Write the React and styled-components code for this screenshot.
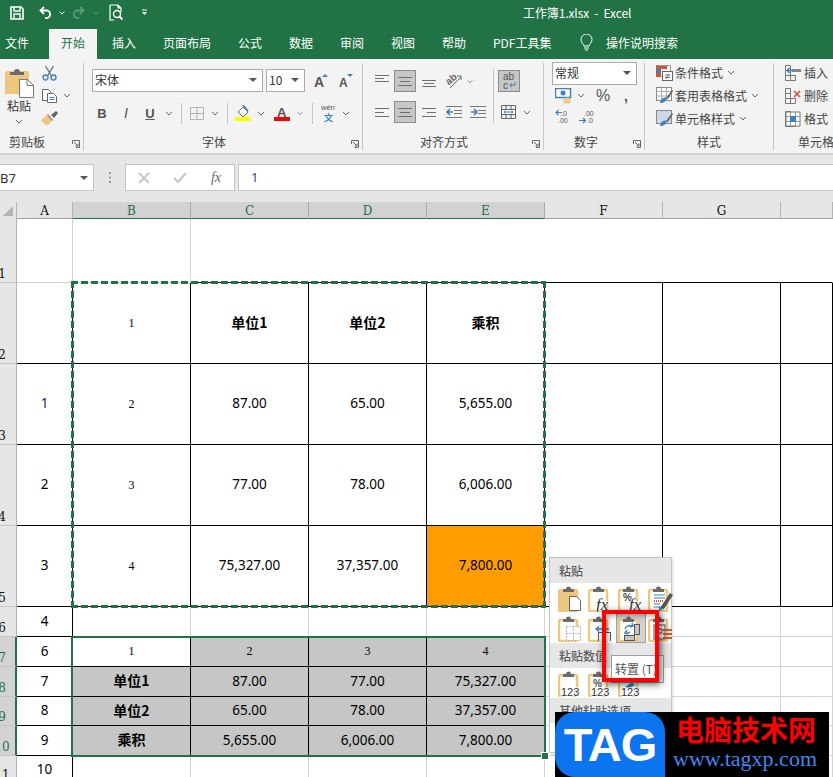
import React from 'react';
import styled, { createGlobalStyle } from 'styled-components';

const GREEN = '#217346';
const TAN = '#eec77f';
const GRAY = '#6b6b6b';
const BLUE = '#3f7fbf';
const UI = '"Noto Sans CJK SC", "Noto Sans", sans-serif';
const lineColors = { k: '#000', g: '#d4d4d4', n: 'transparent' };

const Global = createGlobalStyle`
  body { margin: 0; font-family: ${UI}; background: #fff; }
`;

const Page = styled.div`
  position: relative;
  width: 833px;
  height: 777px;
  overflow: hidden;
`;

/* title bar */
const TitleBar = styled.div`
  display: flex;
  align-items: center;
  height: 29px;
  padding-bottom: 4px;
  box-sizing: border-box;
  background: ${GREEN};
  color: #fff;
`;
const Quick = styled.div`
  display: flex;
  align-items: center;
  width: 523px;
`;
const Title = styled.div`
  font-size: 12px;
  white-space: pre;
  letter-spacing: -0.1px;
`;

/* tabs */
const TabBar = styled.div`
  display: flex;
  align-items: stretch;
  gap: 3px;
  height: 30px;
  padding-left: 5px;
  background: ${GREEN};
`;
const Tab = styled.div`
  width: ${(p) => p.$w || 48}px;
  padding-left: ${(p) => (p.$first ? 0 : 12)}px;
  box-sizing: border-box;
  line-height: 28px;
  font-size: 12px;
  white-space: nowrap;
  color: ${(p) => (p.$active ? GREEN : '#fff')};
  background: ${(p) => (p.$active ? '#f3f3f3' : 'transparent')};
`;
const SearchHint = styled.div`
  display: flex;
  align-items: center;
  gap: 13px;
  margin-left: 14px;
  padding-bottom: 3px;
  color: #fff;
  font-size: 12px;
`;

/* ribbon */
const Ribbon = styled.div`
  display: flex;
  height: 96px;
  padding-top: 4px;
  box-sizing: border-box;
  background: #f3f3f3;
  border-bottom: 2px solid #d4d4d4;
  color: #444;
  font-size: 12px;
`;
const Group = styled.div`
  display: flex;
  flex-direction: column;
  width: ${(p) => p.$w}px;
  height: 87px;
  flex: none;
  box-sizing: border-box;
  border-right: 1px solid ${(p) => (p.$last ? 'transparent' : '#c6c6c6')};
`;
const GroupBody = styled.div`
  flex: 1;
  display: flex;
  min-height: 0;
  padding-left: ${(p) => p.$pl || 0}px;
`;
const GroupFoot = styled.div`
  display: flex;
  align-items: center;
  height: 17px;
  flex: none;
  padding-left: ${(p) => p.$pl}px;
  padding-right: 3px;
  white-space: nowrap;
  font-size: 12px;
  color: #444;
`;
const Launcher = styled.svg`
  margin-left: auto;
  margin-top: 4px;
`;
const Stack = styled.div`
  display: flex;
  flex-direction: column;
  padding-top: ${(p) => p.$pt || 0}px;
  margin-left: ${(p) => p.$ml || 0}px;
  margin-top: ${(p) => p.$mt || 0}px;
  gap: ${(p) => p.$gap || 0}px;
`;
const Row = styled.div`
  display: flex;
  align-items: center;
  height: ${(p) => p.$h || 22}px;
  margin-left: ${(p) => p.$ml || 0}px;
`;
const Slot = styled.div`
  display: flex;
  align-items: center;
  justify-content: center;
  flex: none;
  width: ${(p) => p.$w}px;
  height: 100%;
  color: #555;
`;
const Sep = styled.div`
  flex: none;
  width: 1px;
  height: ${(p) => p.$h}px;
  margin-left: ${(p) => p.$ml || 0}px;
  background: #c6c6c6;
`;
const ActiveBox = styled.div`
  display: flex;
  align-items: center;
  justify-content: center;
  width: 22px;
  height: 22px;
  box-sizing: border-box;
  flex: none;
  background: #c6c6c6;
  border: 1px solid #8c8c8c;
`;
const PasteColumn = styled.div`
  display: flex;
  flex-direction: column;
  align-items: center;
  width: 28px;
  margin-left: 5px;
  padding-top: 4px;
  font-size: 12px;
  color: #333;
  line-height: 16px;
`;
const ClipTools = styled.div`
  display: flex;
  flex-direction: column;
  margin-left: 7px;
  margin-top: -2px;
`;
const Select = styled.div`
  display: flex;
  align-items: center;
  justify-content: space-between;
  flex: none;
  width: ${(p) => p.$w}px;
  height: 23px;
  margin-right: ${(p) => p.$mr || 0}px;
  margin-top: ${(p) => p.$mt || 0}px;
  padding: 0 5px 2px 2px;
  box-sizing: border-box;
  background: #fff;
  border: 1px solid #ababab;
  font-size: 12px;
  color: #333;
`;
const StyleRow = styled.div`
  display: flex;
  align-items: center;
  gap: ${(p) => p.$gap || 2}px;
  height: 23px;
  font-size: 12px;
  color: #444;
  white-space: nowrap;
`;
const Chevron = () => (
  <svg width="8" height="5" viewBox="0 0 8 5"><path d="M1 1l3 3 3-3" fill="none" stroke="#666" strokeWidth="1" /></svg>
);
const Caret = () => (
  <svg width="8" height="4" viewBox="0 0 8 4"><path d="M0 0h8L4 4z" fill="#555" /></svg>
);
const FontLetter = styled.span`
  font-family: "Liberation Sans", sans-serif;
  font-size: ${(p) => p.$size || 13}px;
  font-weight: ${(p) => (p.$bold ? 700 : 400)};
  font-style: ${(p) => (p.$italic ? 'italic' : 'normal')};
  text-decoration: ${(p) => (p.$under ? 'underline' : 'none')};
  color: #555;
`;

/* formula bar */
const FormulaBar = styled.div`
  display: flex;
  align-items: flex-start;
  height: 47px;
  padding-top: 9px;
  box-sizing: border-box;
  background: #e6e6e6;
`;
const NameBox = styled.div`
  display: flex;
  align-items: center;
  justify-content: space-between;
  width: 94px;
  height: 27px;
  padding: 0 5px 0 0;
  box-sizing: border-box;
  background: #fff;
  border: 1px solid #c6c6c6;
  border-left: 0;
  font: 13px "Noto Sans", sans-serif;
  color: #333;
`;
const FxButtons = styled.div`
  display: flex;
  align-items: center;
  width: 110px;
  height: 27px;
  box-sizing: border-box;
  background: #fff;
  border: 1px solid #c6c6c6;
`;
const Grip = styled.div`
  width: 31px;
  height: 27px;
  display: flex;
  align-items: center;
  justify-content: center;
`;
const FormulaInput = styled.div`
  flex: 1;
  height: 27px;
  margin-left: 3px;
  padding-left: 12px;
  box-sizing: border-box;
  background: #fff;
  border: 1px solid #c6c6c6;
  border-right: 0;
  font: 13px/25px "Noto Sans", sans-serif;
  color: #24527f;
`;
const FxSlot = styled.div`
  width: 36px;
  display: flex;
  justify-content: center;
  font: italic 14px "Liberation Serif", serif;
  color: #666;
`;

/* sheet */
const Sheet = styled.div`
  position: relative;
`;
const ColHeaders = styled.div`
  display: grid;
  grid-template-columns: 17px 56px repeat(6, 118px) 1fr;
  height: 17px;
  background: #e6e6e6;
`;
const ColHead = styled.div`
  display: flex;
  align-items: center;
  justify-content: center;
  padding-top: 2px;
  box-sizing: border-box;
  font: 12px "DejaVu Serif", "Liberation Serif", serif;
  background: ${(p) => (p.$on ? '#d2d2d2' : '#e6e6e6')};
  color: ${(p) => (p.$on ? GREEN : '#111')};
  border-right: 1px solid ${(p) => (p.$on ? '#ababab' : '#b4b4b4')};
  border-bottom: 2px solid ${(p) => (p.$on ? GREEN : '#a0a0a0')};
`;
const Corner = styled.div`
  display: flex;
  align-items: flex-end;
  justify-content: flex-end;
  padding: 0 3px 3px 0;
  box-sizing: border-box;
  border-right: 1px solid #b4b4b4;
  border-bottom: 1px solid #b4b4b4;
`;
const CellGrid = styled.div`
  display: grid;
  grid-template-columns: 17px 56px repeat(6, 118px) 1fr;
  grid-template-rows: 64px 81px 81px 81px 81px 30px 30px 30px 29px 30px 28px;
`;
const RowHead = styled.div`
  display: flex;
  align-items: flex-end;
  overflow: hidden;
  box-sizing: border-box;
  background: ${(p) => (p.$on ? '#d2d2d2' : '#e6e6e6')};
  color: ${(p) => (p.$on ? GREEN : '#111')};
  border-right: ${(p) => (p.$on ? `2px solid ${GREEN}` : '1px solid #b4b4b4')};
  border-bottom: 1px solid #c6c6c6;
  font: 12px/16px "DejaVu Serif", "Liberation Serif", serif;
  span {
    flex: none;
    width: 24px;
    margin-left: -10px;
    text-align: center;
  }
`;
const Cell = styled.div`
  display: flex;
  align-items: center;
  justify-content: center;
  padding-bottom: ${(p) => (p.$bold ? 3 : p.$serif ? 0 : 2)}px;
  box-sizing: border-box;
  grid-column: ${(p) => (p.$span ? `span ${p.$span}` : 'auto')};
  background: ${(p) => p.$bg || '#fff'};
  color: ${(p) => p.$color || '#000'};
  border-right: 1px solid ${(p) => lineColors[p.$r || 'n']};
  border-bottom: 1px solid ${(p) => lineColors[p.$b || 'n']};
  font-family: ${(p) => (p.$serif ? '"Liberation Serif", serif' : p.$bold ? UI : '"Noto Sans", sans-serif')};
  font-size: ${(p) => (p.$serif ? 12 : p.$bold ? 14 : 13.5)}px;
  font-weight: ${(p) => (p.$bold ? 700 : 400)};
`;
const CopyAnts = styled.div`
  position: absolute;
  left: 71px;
  top: 79px;
  width: 475px;
  height: 327px;
  background:
    repeating-linear-gradient(90deg, ${GREEN} 0 7px, transparent 7px 10px) top / 100% 3px no-repeat,
    repeating-linear-gradient(90deg, ${GREEN} 0 7px, transparent 7px 10px) bottom / 100% 3px no-repeat,
    repeating-linear-gradient(0deg, ${GREEN} 0 7px, transparent 7px 10px) left / 3px 100% no-repeat,
    repeating-linear-gradient(0deg, ${GREEN} 0 7px, transparent 7px 10px) right / 3px 100% no-repeat;
`;
const Selection = styled.div`
  position: absolute;
  left: 71px;
  top: 434px;
  width: 475px;
  height: 121px;
  box-sizing: border-box;
  border: 2px solid ${GREEN};
  &::after {
    content: '';
    position: absolute;
    right: -5px;
    bottom: -5px;
    width: 6px;
    height: 6px;
    background: ${GREEN};
    border: 1px solid #fff;
  }
`;

/* paste menu */
const PasteMenu = styled.div`
  position: absolute;
  left: 549px;
  top: 557px;
  width: 123px;
  height: 196px;
  box-sizing: border-box;
  background: #fff;
  border: 1px solid #c6c6c6;
  box-shadow: 1px 1px 3px rgba(0, 0, 0, 0.15);
`;
const MenuHead = styled.div`
  height: 25px;
  padding-left: 9px;
  background: #e6e6e6;
  font-size: 12px;
  font-weight: 500;
  line-height: 25px;
  color: #5c5c5c;
`;
const MenuIcons = styled.div`
  display: grid;
  grid-template-columns: repeat(4, 30px);
  grid-auto-rows: 30px;
  padding: ${(p) => p.$pt || 0}px 0 0 6px;
`;
const MenuIcon = styled.div`
  display: flex;
  align-items: center;
  justify-content: center;
  box-sizing: border-box;
  background: ${(p) => (p.$on ? '#d2d2d2' : 'transparent')};
  border: 1px solid ${(p) => (p.$on ? '#a0a0a0' : 'transparent')};
`;
const Tip = styled.div`
  position: absolute;
  left: 611px;
  top: 655px;
  width: 53px;
  height: 28px;
  padding-left: 3px;
  box-sizing: border-box;
  background: #fff;
  border: 1px solid #a0a0a0;
  font-size: 12px;
  line-height: 26px;
  color: #555;
  white-space: nowrap;
  overflow: hidden;
`;
const RedMark = styled.div`
  position: absolute;
  left: 602px;
  top: 610px;
  width: 57px;
  height: 72px;
  box-sizing: border-box;
  border: 4px solid #f00;
  box-shadow: 2px 2px 7px rgba(0, 0, 0, 0.65), inset 2px 2px 5px rgba(0, 0, 0, 0.35);
`;

/* watermark */
const Watermark = styled.div`
  position: absolute;
  left: 555px;
  top: 712px;
  display: flex;
  width: 274px;
  height: 65px;
  background: #000;
`;
const LogoBadge = styled.div`
  display: flex;
  align-items: center;
  justify-content: center;
  width: 110px;
  height: 65px;
  flex: none;
  border-radius: 20px 20px 0 20px;
  background: #0b74ee;
  color: #fff;
  font: 700 47px "Liberation Sans", sans-serif;
  letter-spacing: -1px;
`;
const LogoText = styled.div`
  display: flex;
  flex-direction: column;
  padding-left: 11px;
`;
const LogoCn = styled.div`
  font: 700 28px/34px "Noto Sans CJK SC", sans-serif;
  margin-top: 0;
  color: #f00;
  white-space: nowrap;
`;
const LogoUrl = styled.div`
  font: 22px/26px "Liberation Serif", serif;
  margin-left: -3px;
  color: #3b8af0;
  white-space: nowrap;
`;

/* icons */
const Svg = ({ w, h, children }) => (
  <svg width={w} height={h} viewBox={`0 0 ${w} ${h}`} fill="none">{children}</svg>
);
const Mirrored = styled.span`
  display: flex;
  transform: scaleX(-1);
`;
const SaveIcon = () => (
  <Svg w={14} h={14}>
    <path d="M1 1h10l2 2v10H1z" stroke="#fff" strokeWidth="1.6" />
    <path d="M4 1v4h6V1M4 13V8h6v5" stroke="#fff" strokeWidth="1.4" />
  </Svg>
);
const UndoIcon = ({ dim }) => (
  <Svg w={14} h={13}>
    <path d="M5 1L1.5 4.5 5 8M2 4.5h6.5a4 4 0 0 1 0 7.5H6" stroke={dim ? '#5b9a7b' : '#fff'} strokeWidth="1.8" />
  </Svg>
);
const QChev = ({ dim }) => (
  <svg width="6" height="4" viewBox="0 0 6 4"><path d="M.5.5L3 3 5.5.5" fill="none" stroke={dim ? '#5b9a7b' : '#fff'} /></svg>
);
const PreviewIcon = () => (
  <Svg w={15} h={17}>
    <path d="M1 1h8l3 3v4M5 16H1V1M9 1v3h3" stroke="#fff" strokeWidth="1.2" />
    <circle cx="8" cy="10" r="3.5" stroke="#fff" strokeWidth="1.4" />
    <path d="M10.5 12.5l3 3" stroke="#fff" strokeWidth="1.8" />
  </Svg>
);
const CustomizeIcon = () => (
  <Svg w={7} h={7}>
    <path d="M1 1h5" stroke="#fff" />
    <path d="M1 3h5L3.5 6z" fill="#fff" />
  </Svg>
);
const BulbIcon = () => (
  <Svg w={13} h={18}>
    <path d="M4 12c0-2-3-3-3-6.500a5.500 5.500 0 0 1 11 0C12 9 9 10 9 12z" stroke="#fff" strokeWidth="1" />
    <path d="M4 14h5M5 16h3" stroke="#fff" />
  </Svg>
);
const BigPaste = () => (
  <Svg w={29} h={31}>
    <path d="M0 6a2 2 0 0 1 2-2h20a2 2 0 0 1 2 2v21H0z" fill={TAN} />
    <path d="M5 5h4a3 3 0 0 1 6 0h4v3H5z" fill={GRAY} />
    <path d="M14.500 12.500h8l6 6v12h-14z" fill="#fff" stroke="#777" />
    <path d="M22 12.500v6h6.500" stroke="#777" />
  </Svg>
);
const ScissorsIcon = () => (
  <Svg w={15} h={16}>
    <path d="M3.500 1l6 10M11.500 1l-6 10" stroke="#666" strokeWidth="1.2" />
    <circle cx="3.500" cy="12.500" r="2.500" stroke={BLUE} strokeWidth="1.300" />
    <circle cx="11.500" cy="12.500" r="2.500" stroke={BLUE} strokeWidth="1.300" />
  </Svg>
);
const CopyIcon = () => (
  <Svg w={15} h={14}>
    <path d="M.5.500h6l2 2v9h-8z" fill="#fff" stroke="#666" />
    <path d="M5.500 4.500h6l3 3v6h-9z" fill="#fff" stroke="#666" />
    <path d="M7.500 8.500h5M7.500 10.500h5" stroke={BLUE} />
  </Svg>
);
const BrushIcon = () => (
  <Svg w={17} h={15}>
    <path d="M0 9l6-5 5 6-4 4c-2 1-5-2-7-5z" fill={TAN} />
    <path d="M6 4l5 6 1-1-5-6z" fill="#888" />
    <path d="M10 4l5-4 2 2-4 5z" fill="#666" />
  </Svg>
);
const GrowA = ({ down }) => (
  <Svg w={15} h={17}>
    <text x="0" y="15" fontFamily="Liberation Sans" fontSize={down ? 12 : 14} fill="#555" fontWeight="700">A</text>
    <path d={down ? 'M8 2h6l-3 3z' : 'M8 5h6l-3-3z'} fill={BLUE} />
  </Svg>
);
const BorderIcon = () => (
  <Svg w={14} h={13}>
    <path d="M.5.500h13v12H.5zM.5 6.500h13M7 .5v12" stroke="#777" strokeDasharray="1 1" />
  </Svg>
);
const FillIcon = () => (
  <Svg w={16} h={16}>
    <path d="M3 7l5-5 5 5-5 5z" fill="#fff" stroke="#666" />
    <path d="M8 0l5 6" stroke={BLUE} strokeWidth="1.500" />
    <rect x="0" y="12" width="16" height="4" fill="#ff0" />
  </Svg>
);
const ColorA = () => (
  <Svg w={16} h={16}>
    <text x="3" y="12" fontFamily="Liberation Sans" fontSize="13" fontWeight="700" fill="#555">A</text>
    <rect x="0" y="12" width="16" height="4" fill="#f00" />
  </Svg>
);
const Phonetic = () => (
  <Svg w={16} h={20}>
    <text x="0" y="7" fontFamily="Liberation Sans" fontSize="8" fill="#555">wén</text>
    <text x="3" y="18" fontFamily="Noto Sans CJK SC" fontSize="10" fontWeight="700" fill={BLUE}>文</text>
  </Svg>
);
const Lines = ({ kind = 'center', ys = [3, 7, 11] }) => {
  const widths = { left: [[1, 15], [1, 10], [1, 15]], center: [[1, 15], [3, 13], [1, 15]], right: [[1, 15], [6, 15], [1, 15]] }[kind];
  return (
    <Svg w={16} h={14}>
      {ys.map((y, i) => (
        <path key={y} d={`M${widths[i][0]} ${y + 0.5}H${widths[i][1]}`} stroke="#707070" />
      ))}
    </Svg>
  );
};
const OrientIcon = () => (
  <Svg w={18} h={18}>
    <text x="1" y="10" fontFamily="Liberation Sans" fontSize="10" fontWeight="700" fill="#666" transform="rotate(-40 7 8)">ab</text>
    <path d="M5 16L16 5M12 4h4v4" stroke="#666" />
  </Svg>
);
const Indent = ({ flip }) => (
  <Svg w={16} h={14}>
    <path d="M0 1.500h16M8 5.500h8M8 8.500h8M0 12.500h16" stroke="#777" />
    <path d={flip ? 'M7 7H1M4 4l3 3-3 3' : 'M1 7h6M4 4L1 7l3 3'} stroke={BLUE} strokeWidth="1.600" />
  </Svg>
);
const WrapIcon = () => (
  <Svg w={16} h={20}>
    <text x="2" y="9" fontFamily="Liberation Sans" fontSize="10" fill="#555">ab</text>
    <text x="2" y="18" fontFamily="Liberation Sans" fontSize="10" fill="#555">c</text>
    <path d="M14 11v3H9M11 12l-2 2 2 2" stroke={BLUE} />
  </Svg>
);
const MergeIcon = () => (
  <Svg w={15} h={14}>
    <path d="M.5.500h14v13H.5zM.5 4.500h14M.5 9.500h14M5 .5v4M10 .5v4M5 9.500v4M10 9.500v4" stroke="#666" />
    <rect x="1" y="5" width="13" height="4" fill="#fff" />
    <path d="M3 7h9M4.500 5.500L3 7l1.500 1.500M10.500 5.500L12 7l-1.500 1.500" stroke={BLUE} />
  </Svg>
);
const CurrencyIcon = () => (
  <Svg w={17} h={16}>
    <rect x=".5" y=".5" width="15" height="9" fill="#fff" stroke={BLUE} strokeWidth="1.500" />
    <circle cx="8" cy="5" r="2.500" fill={BLUE} />
    <ellipse cx="12" cy="11" rx="4" ry="1.500" fill={TAN} />
    <ellipse cx="12" cy="14" rx="4" ry="1.500" fill={TAN} />
  </Svg>
);
const DecimalIcon = ({ inc }) => (
  <Svg w={16} h={15}>
    <text x={inc ? 5 : 6} y="7" fontFamily="Liberation Sans" fontSize="7" fill="#555">{inc ? '.00' : '.0'}</text>
    <text x={inc ? 8 : 3} y="14" fontFamily="Liberation Sans" fontSize="7" fill="#555">{inc ? '.0' : '.00'}</text>
    <path d={inc ? 'M0 11.500h6M4 9l2.500 2.500L4 14' : 'M7 3.500H1M3.500 1L1 3.500 3.500 6'} stroke={BLUE} strokeWidth="1.200" />
  </Svg>
);
const CondIcon = () => (
  <Svg w={17} h={16}>
    <rect x="0" y="0" width="11" height="4" fill="#d35230" />
    <rect x="0" y="4" width="5" height="4" fill="#3f7fbf" />
    <rect x="0" y="8" width="5" height="4" fill="#d35230" />
    <path d="M.5.500h14v8" stroke="#999" />
    <rect x="6.500" y="6.500" width="10" height="9" fill="#fff" stroke="#666" />
    <path d="M9 10h5M9 12.500h5M10 14l3-5" stroke="#555" strokeWidth=".8" />
  </Svg>
);
const TableStyleIcon = ({ plain }) => (
  <Svg w={17} h={17}>
    <rect x=".5" y=".5" width="15" height="13" fill={plain ? '#cfd8e6' : '#fff'} stroke="#888" />
    {!plain && <path d="M.5 4.500h15M.5 9h15M5.500.5v13M10.500.5v13" stroke="#aaa" />}
    <path d="M10 11l6-8 1 1-5 8z" fill="#666" />
    <path d="M5 13c2-3 4-3 6-2-1 3-3 5-7 5z" fill={BLUE} />
  </Svg>
);
const CellInsert = ({ kind }) => (
  <Svg w={16} h={16}>
    <path d="M.5.500h5v5h-5zM.5 5.500h5v5h-5zM.5 10.500h5v5h-5zM5.500 10.500h5v5h-5z" stroke="#777" />
    {kind === 'insert' && <path d="M7 5.500h9" stroke="#888" strokeWidth="3" />}
    {kind === 'insert' && <path d="M8 5.500H2M4.500 3L2 5.500 4.500 8" stroke={BLUE} strokeWidth="1.400" />}
    {kind === 'delete' && <path d="M9 3l6 6M15 3L9 9" stroke="#d35230" strokeWidth="1.600" />}
    {kind === 'format' && <path d="M1 1h14v14H1z" fill="#fff" stroke="#777" />}
    {kind === 'format' && <path d="M1 5.500h14M1 10.500h14M5.500 1v14M10.500 1v14" stroke="#999" />}
    {kind === 'format' && <rect x="5" y="5" width="6" height="6" fill={BLUE} />}
  </Svg>
);
const LauncherIcon = () => (
  <Launcher width="8" height="8" viewBox="0 0 8 8" fill="none">
    <path d="M.5 4V.5H7.500V7.500H4M2 2l4 4M6 3.500V6H3.500" stroke="#666" />
  </Launcher>
);
const Clip = ({ solid, children }) => (
  <Svg w={26} h={27}>
    <path d="M2.500 5h15a1.500 1.500 0 0 1 1.500 1.500v18a1.500 1.500 0 0 1-1.500 1.500h-15A1.500 1.500 0 0 1 1 24.500v-18A1.500 1.500 0 0 1 2.500 5z" fill={solid ? TAN : '#fff'} stroke={TAN} strokeWidth="2.500" />
    <path d="M5 6V4h3a2.500 2.500 0 0 1 5 0h3v3H5z" fill={GRAY} />
    {children}
  </Svg>
);
const Formula = ({ pct }) => (
  <>
    {pct && <text x="5" y="16" fontFamily="Liberation Sans" fontWeight="700" fontSize="10" fill="#444">%</text>}
    <text x={pct ? 11 : 8} y="25" fontFamily="Liberation Serif" fontStyle="italic" fontSize="17" fill="#333" stroke="#fff" strokeWidth="1.500" paintOrder="stroke">fx</text>
  </>
);
const MenuNum = () => (
  <text x="3" y="26" fontFamily="Liberation Sans" fontSize="11" fill="#333" stroke="#fff" strokeWidth="1.500" paintOrder="stroke">123</text>
);
const menuTop = [
  <Clip solid key="a"><path d="M11.500 11.500h7l4 4v10h-11z" fill="#fff" stroke="#666" /></Clip>,
  <Clip key="b"><Formula /></Clip>,
  <Clip key="c"><Formula pct /></Clip>,
  <Clip key="d">
    <path d="M6 10h11M6 13h11" stroke={BLUE} />
    <path d="M6 16h9" stroke="#d35230" strokeWidth="2" strokeDasharray="1 1" />
    <path d="M6 19h6M6 22h6" stroke={BLUE} />
    <path d="M12 23l10-15 3 2-9 14z" fill="#555" />
    <path d="M11 21l5 3-5 2z" fill={BLUE} />
  </Clip>,
];
const menuMid = [
  <Clip key="e"><path d="M8.500 11.500h14v14h-14zM8.500 18.500h14M15.500 11.500v14" stroke="#777" strokeDasharray="1 2" fill="#fff" /></Clip>,
  <Clip key="f">
    <path d="M10.500 26v-8.500h12V26" stroke="#555" fill="#fff" />
    <path d="M8 14h13M11 11.500L8 14l3 2.500" stroke={BLUE} strokeWidth="1.400" />
  </Clip>,
  <Clip key="g">
    <path d="M7 14a5 5 0 0 1 7-3M14 8l1 3-3 1M12 17a5 5 0 0 1-5 1M9 15l-2 3 3 1" stroke={BLUE} strokeWidth="1.400" />
    <rect x="16.500" y="9.500" width="5" height="10" fill="#c6c6c6" stroke="#555" />
    <rect x="6.500" y="20.500" width="10" height="5" fill="#c6c6c6" stroke="#555" />
  </Clip>,
  <Clip key="h">
    <rect x="6" y="10" width="11" height="14" fill="#fff" stroke="#555" />
    <path d="M9 14h5v4H9z" stroke="#555" />
    <path d="M15 15h9M15 19h9M15 23h9" stroke="#d35230" strokeWidth="2" />
  </Clip>,
];
const menuValues = [
  <Clip key="i"><MenuNum /></Clip>,
  <Clip key="j">
    <text x="5" y="17" fontFamily="Liberation Sans" fontWeight="700" fontSize="10" fill="#555">%</text>
    <MenuNum />
  </Clip>,
  <Clip key="k">
    <path d="M7 17l7-5 3 3-5 3z" fill={BLUE} />
    <MenuNum />
  </Clip>,
];

/* sheet data */
const COLS = ['A', 'B', 'C', 'D', 'E', 'F', 'G', 'H'];
const emptyTail = (n, line) => Array.from({ length: n }, () => ({ r: line, b: line }));
const head = (t) => ({ t, bold: true, r: 'k', b: 'k' });
const num = (t, extra) => ({ t, r: 'k', b: 'k', ...extra });
const ser = (t, extra) => ({ t, serif: true, r: 'k', b: 'k', ...extra });
const NAVY = '#1a1a80';
const SEL = '#c6c6c6';

const rows = [
  { n: 1, cells: [{ r: 'g', b: 'g' }, { r: 'g', b: 'g' }, { span: 6, b: 'k' }] },
  { n: 2, cells: [{ r: 'k', b: 'k' }, ser('1'), head('单位1'), head('单位2'), head('乘积'), ...emptyTail(3, 'k')] },
  { n: 3, cells: [num('1', { color: NAVY }), ser('2'), num('87.00'), num('65.00'), num('5,655.00'), ...emptyTail(3, 'k')] },
  { n: 4, cells: [num('2'), ser('3'), num('77.00'), num('78.00'), num('6,006.00'), ...emptyTail(3, 'k')] },
  { n: 5, cells: [num('3'), ser('4'), num('75,327.00'), num('37,357.00'), num('7,800.00', { bg: '#ff9c00' }), ...emptyTail(3, 'k')] },
  { n: 6, cells: [num('4'), ...emptyTail(7, 'g')] },
  { n: 7, on: true, cells: [num('6'), ser('1'), ser('2', { bg: SEL }), ser('3', { bg: SEL }), ser('4', { bg: SEL }), ...emptyTail(3, 'g')] },
  { n: 8, on: true, cells: [num('7'), { ...head('单位1'), bg: SEL }, num('87.00', { bg: SEL }), num('77.00', { bg: SEL }), num('75,327.00', { bg: SEL }), ...emptyTail(3, 'g')] },
  { n: 9, on: true, cells: [num('8'), { ...head('单位2'), bg: SEL }, num('65.00', { bg: SEL }), num('78.00', { bg: SEL }), num('37,357.00', { bg: SEL }), ...emptyTail(3, 'g')] },
  { n: 10, on: true, cells: [num('9'), { ...head('乘积'), bg: SEL }, num('5,655.00', { bg: SEL }), num('6,006.00', { bg: SEL }), num('7,800.00', { bg: SEL }), ...emptyTail(3, 'g')] },
  { n: 11, cells: [num('10', { b: 'g' }), ...emptyTail(7, 'g')] },
];

const tabs = [
  { t: '开始', active: true },
  { t: '插入' },
  { t: '页面布局', w: 72 },
  { t: '公式' },
  { t: '数据' },
  { t: '审阅' },
  { t: '视图' },
  { t: '帮助' },
  { t: 'PDF工具集', w: 82 },
];

const App = () => (
  <Page>
    <Global />
    <TitleBar>
      <Quick>
        <Slot $w={34}><SaveIcon /></Slot>
        <Slot $w={24}><UndoIcon /></Slot>
        <Slot $w={8}><QChev /></Slot>
        <Slot $w={23}><Mirrored><UndoIcon dim /></Mirrored></Slot>
        <Slot $w={14}><QChev dim /></Slot>
        <Slot $w={26}><PreviewIcon /></Slot>
        <Slot $w={30}><CustomizeIcon /></Slot>
      </Quick>
      <Title>工作簿1.xlsx  -  Excel</Title>
    </TitleBar>

    <TabBar>
      <Tab $first $w={41}>文件</Tab>
      {tabs.map((tab) => (
        <Tab key={tab.t} $w={tab.w} $active={tab.active}>{tab.t}</Tab>
      ))}
      <SearchHint>
        <BulbIcon />
        操作说明搜索
      </SearchHint>
    </TabBar>

    <Ribbon>
      <Group $w={84}>
        <GroupBody>
          <PasteColumn>
            <BigPaste />
            <span>粘贴</span>
            <Row $h={14}><Chevron /></Row>
          </PasteColumn>
          <ClipTools>
            <Row $h={23}><Slot $w={18}><ScissorsIcon /></Slot></Row>
            <Row $h={23}><Slot $w={18}><CopyIcon /></Slot><Slot $w={18}><Chevron /></Slot></Row>
            <Row $h={23}><Slot $w={18}><BrushIcon /></Slot></Row>
          </ClipTools>
        </GroupBody>
        <GroupFoot $pl={9}>剪贴板<LauncherIcon /></GroupFoot>
      </Group>

      <Group $w={279}>
        <GroupBody $pl={8}>
          <Stack $pt={6} $gap={9}>
            <Row $h={23}>
              <Select $w={171} $mr={3}>宋体<Caret /></Select>
              <Select $w={39}><span>10</span><Caret /></Select>
              <Slot $w={32}><GrowA /></Slot>
              <Slot $w={18}><GrowA down /></Slot>
            </Row>
            <Row $h={24} $ml={-2}>
              <Slot $w={24}><FontLetter $bold>B</FontLetter></Slot>
              <Slot $w={24}><FontLetter $italic $size={14}>I</FontLetter></Slot>
              <Slot $w={24}><FontLetter $under $bold>U</FontLetter></Slot>
              <Slot $w={14}><Chevron /></Slot>
              <Slot $w={10}><Sep $h={21} /></Slot>
              <Slot $w={21}><BorderIcon /></Slot>
              <Slot $w={16}><Chevron /></Slot>
              <Slot $w={8}><Sep $h={21} /></Slot>
              <Slot $w={24}><FillIcon /></Slot>
              <Slot $w={12}><Chevron /></Slot>
              <Slot $w={30}><ColorA /></Slot>
              <Slot $w={6}><Chevron /></Slot>
              <Slot $w={18}><Sep $h={21} /></Slot>
              <Slot $w={15}><Phonetic /></Slot>
              <Slot $w={20}><Chevron /></Slot>
            </Row>
          </Stack>
        </GroupBody>
        <GroupFoot $pl={118}>字体<LauncherIcon /></GroupFoot>
      </Group>

      <Group $w={181}>
        <GroupBody $pl={6}>
          <Stack $pt={7} $gap={9}>
            <Row>
              <Slot $w={25}><Lines kind="left" ys={[1, 4, 7]} /></Slot>
              <ActiveBox><Lines /></ActiveBox>
              <Slot $w={25}><Lines ys={[6, 9, 12]} /></Slot>
              <Slot $w={26}><OrientIcon /></Slot>
              <Slot $w={6}><Chevron /></Slot>
            </Row>
            <Row>
              <Slot $w={25}><Lines kind="left" /></Slot>
              <ActiveBox><Lines /></ActiveBox>
              <Slot $w={25}><Lines kind="right" /></Slot>
              <Slot $w={26}><Indent /></Slot>
              <Slot $w={22}><Indent flip /></Slot>
            </Row>
          </Stack>
          <Stack $pt={6}><Sep $h={54} $ml={4} /></Stack>
          <Stack $pt={7} $gap={9} $ml={4}>
            <Row><ActiveBox><WrapIcon /></ActiveBox></Row>
            <Row>
              <Slot $w={21}><MergeIcon /></Slot>
              <Slot $w={16}><Chevron /></Slot>
            </Row>
          </Stack>
        </GroupBody>
        <GroupFoot $pl={57}>对齐方式<LauncherIcon /></GroupFoot>
      </Group>

      <Group $w={101}>
        <GroupBody $pl={8}>
          <Stack>
            <Select $w={85} $mt={-1}>常规<Caret /></Select>
            <Row $h={21}>
              <Slot $w={22}><CurrencyIcon /></Slot>
              <Slot $w={14}><Chevron /></Slot>
              <Slot $w={30}><FontLetter $size={16}>%</FontLetter></Slot>
              <Slot $w={16}><FontLetter $bold $size={14}>,</FontLetter></Slot>
            </Row>
            <Row $h={21}>
              <Slot $w={21}><DecimalIcon /></Slot>
              <Slot $w={27}><DecimalIcon inc /></Slot>
            </Row>
          </Stack>
        </GroupBody>
        <GroupFoot $pl={30}>数字<LauncherIcon /></GroupFoot>
      </Group>

      <Group $w={129}>
        <GroupBody $pl={11}>
          <Stack $mt={-2}>
            <StyleRow><CondIcon />条件格式<Slot $w={12}><Chevron /></Slot></StyleRow>
            <StyleRow><TableStyleIcon />套用表格格式<Slot $w={12}><Chevron /></Slot></StyleRow>
            <StyleRow><TableStyleIcon plain />单元格样式<Slot $w={12}><Chevron /></Slot></StyleRow>
          </Stack>
        </GroupBody>
        <GroupFoot $pl={52}>样式</GroupFoot>
      </Group>

      <Group $w={59} $last>
        <GroupBody $pl={11}>
          <Stack $mt={-2}>
            <StyleRow $gap={3}><CellInsert kind="insert" />插入</StyleRow>
            <StyleRow $gap={3}><CellInsert kind="delete" />删除</StyleRow>
            <StyleRow $gap={3}><CellInsert kind="format" />格式</StyleRow>
          </Stack>
        </GroupBody>
        <GroupFoot $pl={24}>单元格</GroupFoot>
      </Group>
    </Ribbon>

    <FormulaBar>
      <NameBox>B7<Caret /></NameBox>
      <Grip>
        <Svg w={2} h={11}><path d="M1 0v2M1 4.500v2M1 9v2" stroke="#999" strokeWidth="2" /></Svg>
      </Grip>
      <FxButtons>
        <FxSlot>
          <Svg w={12} h={12}><path d="M1 1l10 10M11 1L1 11" stroke="#c6c6c6" strokeWidth="1.800" /></Svg>
        </FxSlot>
        <FxSlot>
          <Svg w={14} h={12}><path d="M1 6l4 4 8-9" stroke="#c6c6c6" strokeWidth="2" /></Svg>
        </FxSlot>
        <FxSlot>fx</FxSlot>
      </FxButtons>
      <FormulaInput>1</FormulaInput>
    </FormulaBar>

    <Sheet>
      <ColHeaders>
        <Corner>
          <Svg w={10} h={10}><path d="M10 0v10H0z" fill="#b4b4b4" /></Svg>
        </Corner>
        {COLS.map((c) => (
          <ColHead key={c} $on={['B', 'C', 'D', 'E'].includes(c)}>{c === 'H' ? '' : c}</ColHead>
        ))}
        <ColHead />
      </ColHeaders>
      <CellGrid>
        {rows.map((row) => (
          <React.Fragment key={row.n}>
            <RowHead $on={row.on}><span>{row.n}</span></RowHead>
            {row.cells.map((c, i) => (
              <Cell
                key={i}
                $span={c.span}
                $r={c.r}
                $b={c.b}
                $bg={c.bg}
                $bold={c.bold}
                $serif={c.serif}
                $color={c.color}
              >
                {c.t}
              </Cell>
            ))}
          </React.Fragment>
        ))}
      </CellGrid>
      <CopyAnts />
      <Selection />
    </Sheet>

    <PasteMenu>
      <MenuHead>粘贴</MenuHead>
      <MenuIcons>
        {menuTop.map((icon) => <MenuIcon key={icon.key}>{icon}</MenuIcon>)}
        {menuMid.map((icon) => <MenuIcon key={icon.key} $on={icon.key === 'g'}>{icon}</MenuIcon>)}
      </MenuIcons>
      <MenuHead>粘贴数值</MenuHead>
      <MenuIcons>
        {menuValues.map((icon) => <MenuIcon key={icon.key}>{icon}</MenuIcon>)}
      </MenuIcons>
      <MenuHead>其他粘贴选项</MenuHead>
    </PasteMenu>
    <Tip>转置 (T)</Tip>
    <RedMark />

    <Watermark>
      <LogoBadge>TAG</LogoBadge>
      <LogoText>
        <LogoCn>电脑技术网</LogoCn>
        <LogoUrl>www.tagxp.com</LogoUrl>
      </LogoText>
    </Watermark>
  </Page>
);

export default App;
